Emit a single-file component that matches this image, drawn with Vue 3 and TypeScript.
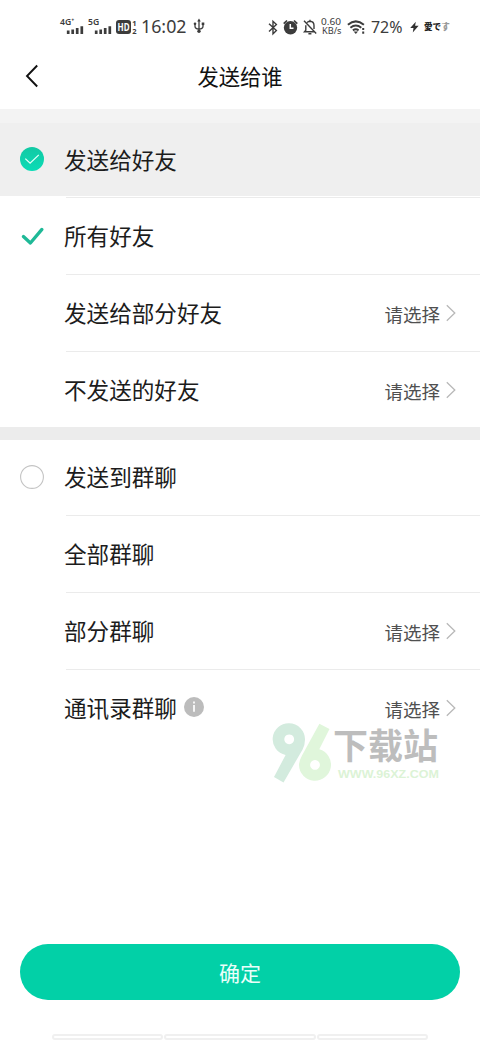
<script setup lang="ts">
interface Row {
  label: string
  mark?: 'radio-on' | 'tick' | 'radio-off'
  choose?: boolean
  info?: boolean
}

const friendRows: Row[] = [
  { label: '发送给好友', mark: 'radio-on' },
  { label: '所有好友', mark: 'tick' },
  { label: '发送给部分好友', choose: true },
  { label: '不发送的好友', choose: true },
]

const groupRows: Row[] = [
  { label: '发送到群聊', mark: 'radio-off' },
  { label: '全部群聊' },
  { label: '部分群聊', choose: true },
  { label: '通讯录群聊', choose: true, info: true },
]

const sections = [
  { name: 'friends', rows: friendRows },
  { name: 'groups', rows: groupRows },
]

const networks = ['4G⁺', '5G']
</script>

<template>
  <div class="screen">
    <div class="status">
      <svg v-for="n in networks" :key="n" class="signal" width="24" height="18" viewBox="0 0 24 18">
        <text x="0" y="7" font-size="8.6" font-weight="600">{{ n }}</text>
        <path d="M8.2 12.6v3.4M12.7 11.6v4.4M17.2 10v6M21.8 8.2v7.8" stroke="#3c3c3c" stroke-width="2.7" />
      </svg>
      <svg class="hd" width="22" height="18" viewBox="0 0 22 18">
        <rect x="0" y="2" width="15" height="14" rx="3" fill="#3c3c3c" />
        <text x="1.5" y="12.6" font-size="10" font-weight="700" textLength="12" lengthAdjust="spacingAndGlyphs" class="light">HD</text>
        <text x="16.3" y="8" font-size="7.5" font-weight="700">1</text>
        <text x="16.3" y="16.4" font-size="7.5" font-weight="700">2</text>
      </svg>
      <svg class="clock" width="47" height="18" viewBox="0 0 47 18">
        <text x="0" y="15.4" font-size="18.4" textLength="45.5" lengthAdjust="spacingAndGlyphs">16:02</text>
      </svg>
      <svg class="usb" width="12" height="16" viewBox="0 0 12 16" fill="none" stroke="#3c3c3c" stroke-width="1.3">
        <path d="M6 2v12M2 6v2.2q0 2.6 4 2.9 4-.3 4-2.9V6" />
        <path d="M4.2 3.4 6 .6l1.8 2.8z" fill="#3c3c3c" stroke="none" />
        <circle cx="6" cy="13.2" r="1.7" fill="#3c3c3c" stroke="none" />
        <circle cx="2" cy="5.8" r="1.3" fill="#3c3c3c" stroke="none" />
        <path d="M8.7 4.5h2.6v2.6H8.7z" fill="#3c3c3c" stroke="none" />
      </svg>

      <svg class="bt" width="10" height="16" viewBox="0 0 10 16" fill="none" stroke="#3c3c3c" stroke-width="1.4">
        <path d="M1 4.8 8.4 11.6 5 14.9V2.3L8.4 5.6 1 12.4" />
      </svg>
      <svg class="alarm" width="15" height="16" viewBox="0 0 15 16">
        <circle cx="7.5" cy="8.7" r="6.7" fill="#3c3c3c" />
        <path d="M.7 4.6 4 1.5M14.3 4.6 11 1.5" stroke="#3c3c3c" stroke-width="1.7" />
        <path d="M7.3 4.9v4.4h3.2" fill="none" stroke="#fff" stroke-width="1.5" />
      </svg>
      <svg class="bell" width="14" height="16" viewBox="0 0 14 16" fill="none" stroke="#3c3c3c" stroke-width="1.4">
        <path d="M4.1 3.6Q5 2.3 7 2.2 11 2.4 11 6.5v3.4M2.8 6.2v5L1.5 12.7h10M5.4 14.8h3M7 .7v1.6M1 1.8l12.2 12.6" />
      </svg>
      <svg class="speed" width="22" height="24" viewBox="0 0 22 24">
        <text x="0" y="11" font-size="9.4" textLength="20" lengthAdjust="spacingAndGlyphs">0.60</text>
        <text x="1" y="19.6" font-size="8" textLength="19.5" lengthAdjust="spacingAndGlyphs">KB/s</text>
      </svg>
      <svg class="wifi" width="19" height="16" viewBox="0 0 19 16" fill="none" stroke="#3c3c3c" stroke-width="2">
        <path d="M.9 5.8Q8.8-1 16.9 5.8M3.4 8.7q5.4-4.3 10.9 0M5.9 11.4q2.9-2.1 5.7 0" />
        <path d="M6.6 12.4h4.4l-2.2 2.6z" fill="#3c3c3c" stroke="none" />
        <path d="M16.2 8.9v2.2M16.2 12.6v2.2" />
      </svg>
      <svg class="battery" width="33" height="24" viewBox="0 0 33 24">
        <text x="0" y="18.3" font-size="15.6" textLength="31.5" lengthAdjust="spacingAndGlyphs">72%</text>
      </svg>
      <svg class="bolt" width="9" height="12" viewBox="0 0 9 12">
        <path d="M5.8.8.2 7.1h3.3l-.7 4.3 5.8-6.6H5.1z" fill="#303030" />
      </svg>
      <span class="carrier">愛で<i>す</i></span>
    </div>

    <header class="nav">
      <svg class="back" width="16" height="26" viewBox="0 0 16 26">
        <path d="M13.2 2.5 3 13l10.2 10.5" fill="none" stroke="#111" stroke-width="1.9" />
      </svg>
      <h1>发送给谁</h1>
    </header>
    <div class="strip"></div>

    <main>
      <section v-for="s in sections" :key="s.name" :class="s.name">
        <div v-for="row in s.rows" :key="row.label" class="row">
          <div class="mark">
            <svg v-if="row.mark === 'radio-on'" width="24" height="24" viewBox="0 0 24 24">
              <defs>
                <linearGradient id="mint" x1="0" y1="0" x2="0" y2="1">
                  <stop offset="0" stop-color="#12c9a4" />
                  <stop offset="1" stop-color="#0bdcb6" />
                </linearGradient>
              </defs>
              <circle cx="12" cy="12" r="12" fill="url(#mint)" />
              <path d="m5.3 11.6 4.8 4.6 8.7-8.3" fill="none" stroke="#e2fff8" stroke-width="1.3" />
            </svg>
            <svg v-else-if="row.mark === 'tick'" width="24" height="24" viewBox="0 0 24 24">
              <path d="M3.4 11.5 10.4 18 21.9 4.4" fill="none" stroke="#1fb997" stroke-width="3.3" stroke-linecap="round" stroke-linejoin="round" />
            </svg>
            <svg v-else-if="row.mark === 'radio-off'" width="24" height="24" viewBox="0 0 24 24">
              <circle cx="12" cy="12" r="11.4" fill="#fff" stroke="#c4c4c4" stroke-width="1.1" />
            </svg>
          </div>
          <div class="body">
            <span class="label">{{ row.label }}</span>
            <svg v-if="row.info" class="info" width="20" height="20" viewBox="0 0 20 20">
              <circle cx="10" cy="10" r="10" fill="#bcbcbc" />
              <path d="M10 8v6.8M10 4.5v2" stroke="#fff" stroke-width="1.7" />
            </svg>
            <span v-if="row.choose" class="choose">请选择</span>
            <svg v-if="row.choose" class="arrow" width="10" height="18" viewBox="0 0 10 18">
              <path d="M.8 1.2 8.8 9 .8 16.8" fill="none" stroke="#b8b8b8" stroke-width="1.3" />
            </svg>
          </div>
        </div>
      </section>

      <div class="watermark">
        <svg width="59" height="60" viewBox="0 0 59 60">
          <path fill="#d3ebde" fill-rule="evenodd" d="M17 .3a16 16 0 0 1 16 16.5q0 5-2.4 9.6L11.5 59.5 2 54 13.6 32A16 16 0 0 1 17 .3zm.2 11.1a4.9 4.9 0 1 0 .01 0z" />
          <path fill="#e0f6db" fill-rule="evenodd" d="m47.4.8 10.1 5.2-10.2 20.3A16 16 0 1 1 27 42q0-4 3-9.5zM43 37a4.9 4.9 0 1 0 .01 0z" />
        </svg>
        <div class="site">
          <span class="site-name">下载站</span>
          <svg class="site-url" width="103" height="18" viewBox="0 0 103 18">
            <text x="0" y="12.5" font-size="11.6" font-weight="700" textLength="101" lengthAdjust="spacingAndGlyphs">WWW.96XZ.COM</text>
          </svg>
        </div>
      </div>
    </main>

    <button class="confirm" type="button">确定</button>
    <div class="gestures"><i></i><i class="home"></i><i></i></div>
  </div>
</template>

<style>
body {
  margin: 0;
  background: #fff;
}
</style>

<style scoped>
.screen {
  box-sizing: border-box;
  width: 480px;
  height: 1040px;
  overflow: hidden;
  display: flex;
  flex-direction: column;
  position: relative;
  background: #fff;
  color: #1c1c1c;
  font-family: 'Noto Sans CJK SC', sans-serif;
}
svg {
  display: block;
  flex: none;
  overflow: visible;
}
.status {
  height: 52px;
  flex: none;
  display: flex;
  align-items: center;
  padding-left: 60px;
  box-sizing: border-box;
}
.status text {
  font-family: 'Noto Sans', sans-serif;
  fill: #3c3c3c;
}
.status text.light {
  fill: #fff;
}
.signal {
  margin: 2px 4px 0 0;
}
.hd,
.clock,
.bt,
.alarm,
.bell,
.wifi,
.bolt {
  margin-top: 1px;
}
.clock {
  margin-left: 3px;
}
.usb {
  margin-left: 5px;
}
.bt {
  margin-left: 63px;
}
.alarm {
  margin-left: 5px;
}
.bell {
  margin-left: 5px;
}
.speed {
  margin-left: 4px;
}
.wifi {
  margin-left: 4px;
}
.battery {
  margin: 1px 0 0 5px;
}
.bolt {
  margin-left: 6px;
}
.carrier {
  margin: 0 0 0 5px;
  font: 900 8.6px/14px 'Noto Sans CJK JP', sans-serif;
  white-space: nowrap;
  color: #222;
}
.carrier i {
  font-style: normal;
  color: #999;
}
.nav {
  height: 57px;
  flex: none;
  display: flex;
  align-items: center;
  justify-content: center;
  position: relative;
  padding-bottom: 10px;
  box-sizing: border-box;
}
.back {
  position: absolute;
  left: 24px;
  top: 11px;
}
h1 {
  margin: 0;
  font-size: 21.3px;
  line-height: 32px;
  font-weight: 400;
  color: #111;
}
.strip {
  height: 14px;
  flex: none;
  background: #f3f3f3;
}
.row {
  height: 77px;
  display: flex;
}
.mark {
  width: 66px;
  padding-left: 20px;
  box-sizing: border-box;
  display: flex;
  align-items: center;
}
.body {
  flex: 1;
  display: flex;
  align-items: center;
  box-sizing: border-box;
  padding-right: 24px;
  border-bottom: 1px solid #ebebeb;
}
.label {
  margin: 0 0 0 -2px;
  font-size: 22.6px;
  line-height: 34px;
}
.groups .label {
  margin-top: -1px;
}
.info {
  margin: -3px 0 0 7px;
}
.choose {
  margin-left: auto;
  margin-top: 2px;
  font-size: 18.5px;
  line-height: 28px;
  color: #505050;
}
.arrow {
  margin: 0 0 0 6px;
}
.friends .row:first-child {
  height: 75px;
  background: linear-gradient(#efefef 73px, #fff 73px);
}
.friends .row:first-child .mark {
  padding-bottom: 3px;
}
.friends .row:first-child .label {
  margin-top: -1px;
}
.groups .row:first-child .label {
  margin-top: -2px;
}
.friends .row:last-child {
  height: 75px;
}
.friends {
  border-bottom: 13px solid #ececec;
}
.friends .row:last-child .body,
.groups .row:last-child .body {
  border-bottom-color: transparent;
}
.friends .row:last-child .body {
  padding-top: 2px;
}
.groups .row:first-child {
  height: 76px;
}
.groups .row:first-child .mark {
  padding-bottom: 3px;
}
.watermark {
  position: absolute;
  left: 272px;
  top: 723px;
  display: flex;
  gap: 2px;
}
.site-name {
  display: block;
  height: 42px;
  font-size: 35px;
  line-height: 42px;
  font-weight: 700;
  color: #bdbdbd;
}
.site-url {
  margin-left: 5px;
}
.site-url text {
  font-family: 'Liberation Sans', sans-serif;
  fill: #dcf3d6;
}
.confirm {
  width: 440px;
  height: 56px;
  margin: auto 20px 34px;
  flex: none;
  border: 0;
  border-radius: 28px;
  padding: 0;
  background: #02d0a7;
  color: #eafffa;
  font: 400 21px/32px 'Noto Sans CJK SC', sans-serif;
}
.gestures {
  flex: none;
  height: 6px;
  width: 376px;
  margin: 0 auto;
  display: flex;
  gap: 1px;
}
.gestures i {
  flex: 111;
  box-sizing: border-box;
  border: 2px solid #f0f0f0;
  border-radius: 3px;
}
.gestures .home {
  flex: 152;
}
</style>
